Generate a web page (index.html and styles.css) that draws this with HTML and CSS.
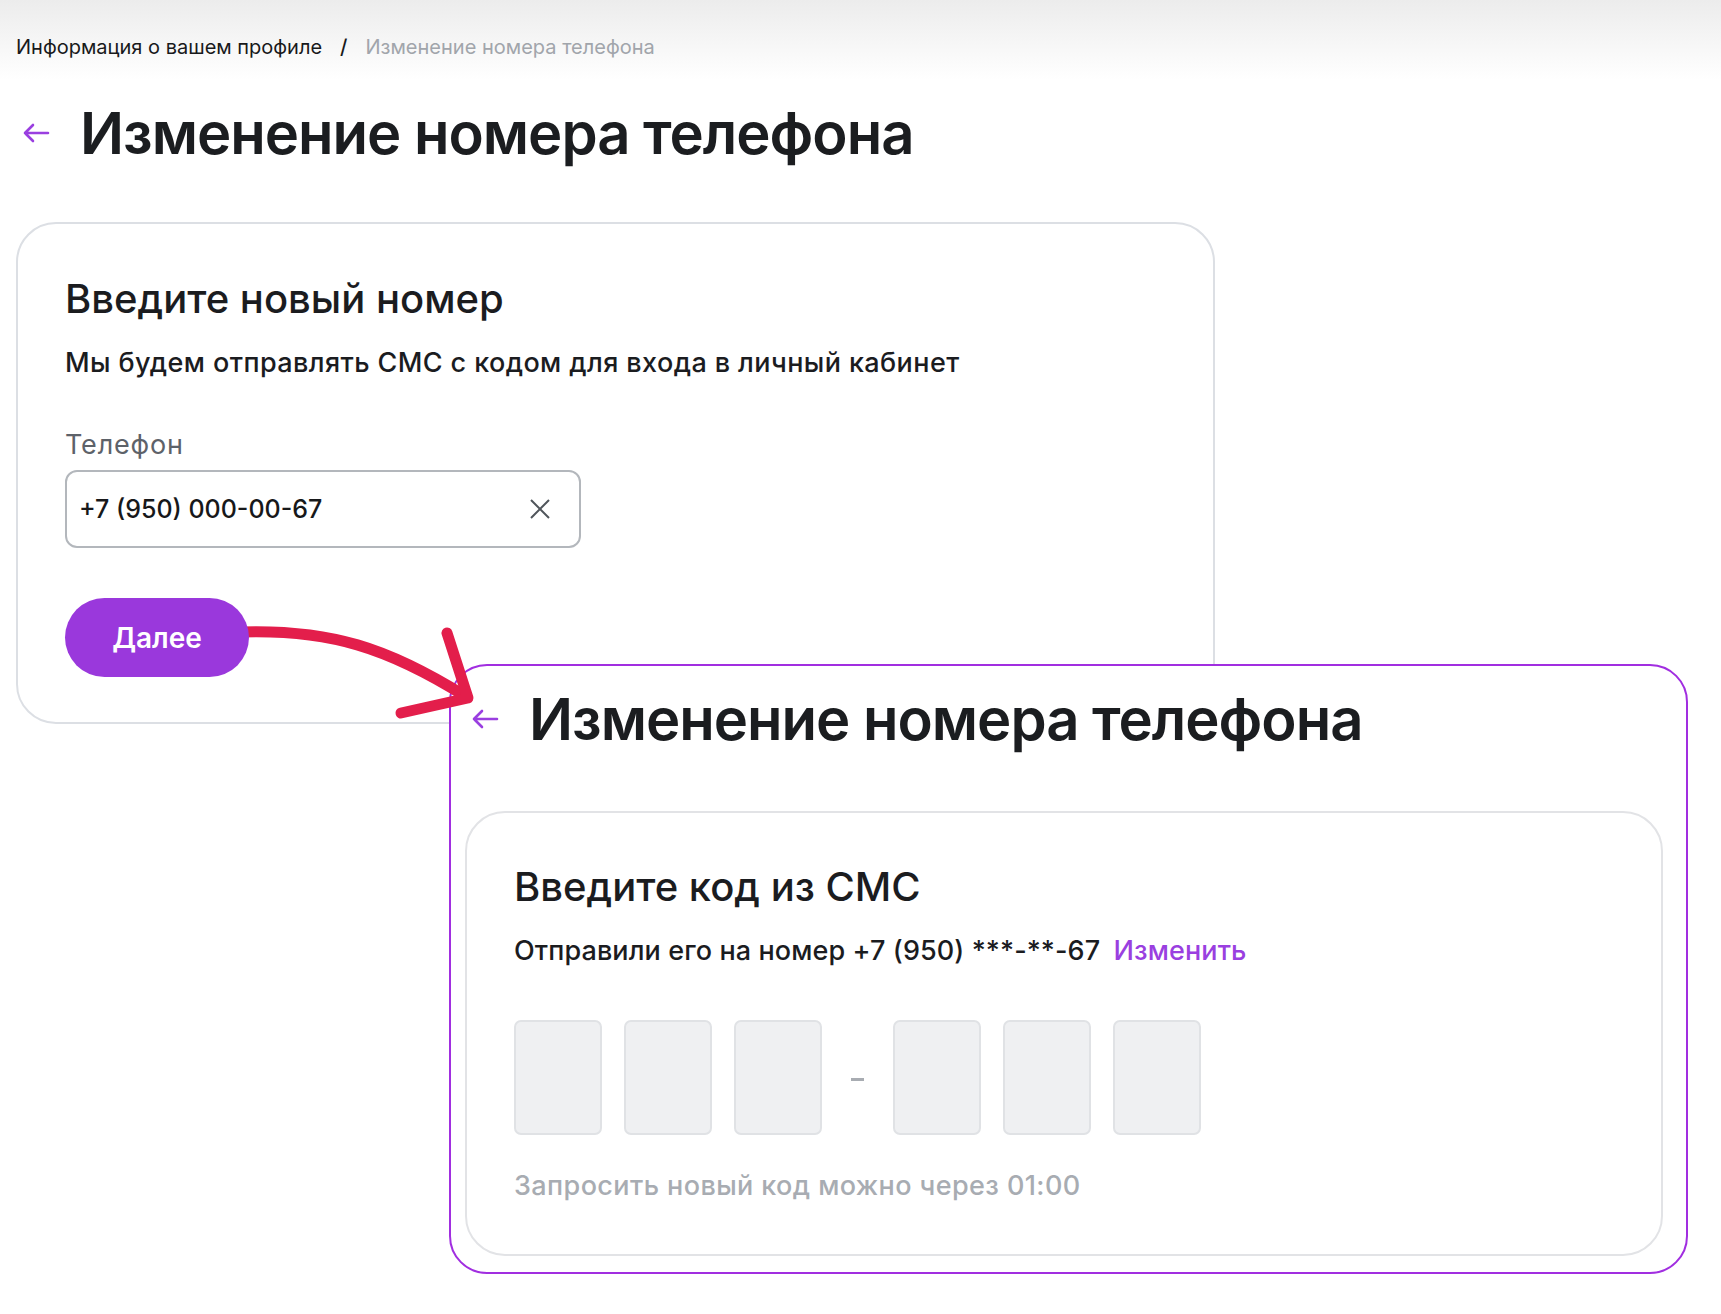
FILE: index.html
```html
<!DOCTYPE html>
<html lang="ru">

<head>
    <meta charset="UTF-8">
    <meta name="viewport" content="width=device-width, initial-scale=1.0">
    <title>Изменение номера телефона</title>
    <link rel="stylesheet" href="styles.css">
</head>

<body>
    <div class="page">
        <nav class="crumbs">
            <a href="#">Информация о вашем профиле</a>
            <span class="sep">/</span>
            <span class="current">Изменение номера телефона</span>
        </nav>

        <div class="head">
            <svg class="back" width="28" height="22" viewBox="0 0 28 22">
                <path d="M26 11H3M11 3L3 11L11 19" />
            </svg>
            <h1>Изменение номера телефона</h1>
        </div>

        <!-- шаг 1: новый номер -->
        <section class="card">
            <h2>Введите новый номер</h2>
            <p class="lead">Мы будем отправлять СМС с кодом для входа в личный кабинет</p>

            <label class="label" for="phone">Телефон</label>
            <div class="field">
                <input type="text" id="phone" value="+7 (950) 000-00-67">
                <svg class="clear" width="22" height="22" viewBox="0 0 22 22">
                    <path d="M2 2L20 20M20 2L2 20" />
                </svg>
            </div>

            <button class="btn">Далее</button>
        </section>
    </div>

    <!-- шаг 2: код из СМС -->
    <div class="shot">
        <div class="head">
            <svg class="back" width="28" height="22" viewBox="0 0 28 22">
                <path d="M26 11H3M11 3L3 11L11 19" />
            </svg>
            <h1>Изменение номера телефона</h1>
        </div>

        <section class="card card-code">
            <h2>Введите код из СМС</h2>
            <p class="lead">Отправили его на номер +7 (950) ***-**-67 <a href="#" class="change">Изменить</a></p>

            <div class="code">
                <span class="cell"></span>
                <span class="cell"></span>
                <span class="cell"></span>
                <span class="dash"></span>
                <span class="cell"></span>
                <span class="cell"></span>
                <span class="cell"></span>
            </div>

            <p class="timer">Запросить новый код можно через 01:00</p>
        </section>
    </div>

    <svg class="pointer" width="520" height="740" viewBox="0 0 520 740">
        <path d="M240 632C330 629 388 648 465 696" />
        <path d="M447 633L468 698L401 713" />
    </svg>
</body>

</html>
```

FILE: styles.css
```css
body {
    margin: 0;
    font-family: Inter, "Noto Sans", sans-serif;
    color: #1b1c1f;
    background: linear-gradient(#ececec 0, #ffffff 80px) no-repeat;
    min-height: 1314px;
    position: relative;
}

.page {
    padding: 35px 16px 0;
}

.crumbs {
    display: flex;
    align-items: center;
    gap: 18px;
    font-size: 20px;
    line-height: 24px;
}

.crumbs a {
    color: #18191b;
    text-decoration: none;
}

.crumbs .sep {
    color: #18191b;
    font-weight: 500;
}

.crumbs .current {
    color: #a1a5ab;
}

.head {
    display: flex;
    align-items: center;
    gap: 30px;
    padding-left: 6px;
    margin-top: 42px;
}

.back {
    fill: none;
    stroke: #9a3fe0;
    stroke-width: 2.6;
    stroke-linecap: round;
    stroke-linejoin: round;
}

h1 {
    margin: 0;
    font-size: 58px;
    line-height: 64px;
    font-weight: 600;
    letter-spacing: -1px;
    color: #1b1d20;
}

.card {
    box-sizing: border-box;
    width: 1199px;
    margin-top: 57px;
    padding: 51px 47px 45px;
    border: 2px solid #dcdfe4;
    border-radius: 40px;
    background: #ffffff;
}

.card h2 {
    margin: 0;
    font-size: 40px;
    line-height: 48px;
    font-weight: 500;
}

.lead {
    margin: 24px 0 0;
    font-size: 27px;
    line-height: 32px;
    font-weight: 500;
    letter-spacing: 0.4px;
}

.label {
    display: block;
    margin-top: 50px;
    font-size: 27px;
    line-height: 32px;
    letter-spacing: 0.8px;
    color: #5d6269;
}

.field {
    box-sizing: border-box;
    width: 516px;
    height: 78px;
    margin-top: 9px;
    padding: 0 28px 0 12px;
    display: flex;
    align-items: center;
    border: 2px solid #b3b7bc;
    border-radius: 12px;
}

.field input {
    flex: 1;
    border: none;
    outline: none;
    padding: 0;
    font-family: inherit;
    font-size: 25px;
    font-weight: 500;
    color: #17181a;
}

.clear {
    fill: none;
    stroke: #50555b;
    stroke-width: 2;
}

.btn {
    position: relative;
    z-index: 6;
    display: block;
    width: 184px;
    height: 79px;
    margin-top: 50px;
    border: none;
    border-radius: 40px;
    background-color: #9a38dc;
    color: #ffffff;
    font-family: inherit;
    font-size: 28px;
    font-weight: 600;
    cursor: pointer;
}

/* второй экран поверх первого */
.shot {
    position: absolute;
    left: 449px;
    top: 664px;
    z-index: 2;
    box-sizing: border-box;
    width: 1239px;
    height: 610px;
    padding: 21px 14px 0;
    border: 2px solid #a12ee0;
    border-radius: 38px;
    background: #ffffff;
    overflow: hidden;
}

.shot .head {
    margin-top: 0;
}

.shot .card {
    margin-top: 60px;
}

.card-code {
    width: 1198px;
    padding-top: 50px;
    padding-bottom: 52px;
    border-color: #e2e3e6;
}

.card-code .lead {
    letter-spacing: 0.1px;
}

.change {
    margin-left: 6px;
    color: #9a3fe0;
    text-decoration: none;
}

.code {
    display: flex;
    align-items: center;
    gap: 22px;
    margin-top: 53px;
}

.cell {
    box-sizing: border-box;
    width: 88px;
    height: 115px;
    border: 2px solid #e0e2e5;
    border-radius: 7px;
    background: #eff0f2;
}

.dash {
    width: 27px;
    display: flex;
    justify-content: center;
}

.dash::before {
    content: "";
    width: 13px;
    height: 3px;
    margin-top: 4px;
    background: #a8acb2;
}

.timer {
    margin: 35px 0 0;
    font-size: 27px;
    line-height: 32px;
    font-weight: 500;
    color: #a8acb2;
    letter-spacing: 0.4px;
}

.pointer {
    position: absolute;
    left: 0;
    top: 0;
    z-index: 5;
    fill: none;
    stroke: #e31e4b;
    stroke-width: 11;
    stroke-linecap: round;
    stroke-linejoin: round;
    pointer-events: none;
}
```
